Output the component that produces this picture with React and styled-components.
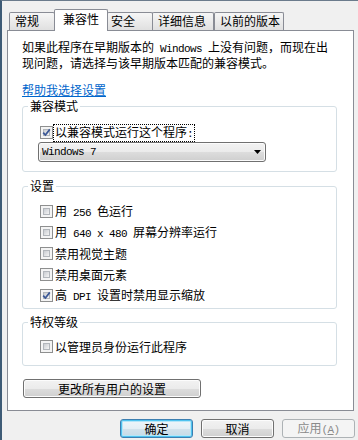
import React from 'react'
import styled, { createGlobalStyle, css } from 'styled-components'

const GlobalStyle = createGlobalStyle`
  html, body {
    margin: 0;
    padding: 0;
    background: #f0f0f0;
  }
  body {
    font-family: "Noto Sans CJK SC", "Noto Sans", sans-serif;
    font-size: 12px;
    color: #000;
  }
`

const Window = styled.div`
  box-sizing: border-box;
  width: 358px;
  height: 440px;
  overflow: hidden;
  background: #f0f0f0;
  border-top: 1px solid #6b7b8c;
  border-left: 2px solid #3e5b76;
  display: flex;
  flex-direction: column;
`

const TabStrip = styled.div`
  display: flex;
  align-items: flex-end;
  height: 21px;
  margin: 8px 0 0 7px;
`

const Tab = styled.div`
  box-sizing: border-box;
  width: ${p => p.$w}px;
  height: ${p => (p.$active ? 22 : 18)}px;
  margin-left: ${p => p.$ml || 0}px;
  margin-bottom: ${p => (p.$active ? -1 : 0)}px;
  padding-left: ${p => p.$pl}px;
  border: 1px solid #898c95;
  border-bottom: none;
  border-radius: 2px 2px 0 0;
  background: ${p => (p.$active ? '#fff' : 'linear-gradient(#f6f6f6, #ebebeb 50%, #e0e0e0)')};
  line-height: ${p => (p.$active ? 18 : 16)}px;
  white-space: nowrap;
  position: relative;
  z-index: ${p => (p.$active ? 2 : 1)};
`

const Panel = styled.div`
  box-sizing: border-box;
  width: 347px;
  height: 381px;
  margin-left: 5px;
  padding: 9px 16px 0 14px;
  background: #fff;
  border: 1px solid #898c95;
  display: flex;
  flex-direction: column;
  align-items: flex-start;
`

const Lat = styled.span`
  font-family: "Liberation Mono", monospace;
  font-size: 11px;
  letter-spacing: -0.6px;
`

const Intro = styled.p`
  margin: 0;
  line-height: 13px;
  white-space: nowrap;
`

const HelpLink = styled.a`
  margin-top: 14px;
  line-height: 13px;
  color: #0066cc;
  text-decoration: underline;
  cursor: pointer;
`

const Group = styled.section`
  box-sizing: border-box;
  width: 315px;
  margin-top: ${p => p.$mt}px;
  padding-bottom: ${p => p.$pb}px;
  border: 1px solid #d5dfe5;
  border-radius: 3px;
  display: flex;
  flex-direction: column;
  align-items: flex-start;
`

const GroupTitle = styled.div`
  margin: -8px 0 0 5px;
  padding: 0 2px;
  line-height: 14px;
  background: #fff;
`

const GroupBody = styled.div`
  display: flex;
  flex-direction: column;
  align-items: flex-start;
  gap: ${p => p.$gap || 0}px;
  padding: ${p => p.$pt}px 0 0 17px;
`

const Option = styled.label`
  display: flex;
  align-items: center;
  gap: 1px;
  height: 15px;
  white-space: nowrap;
`

const OptionText = styled.span`
  padding: 0 1px;
  line-height: 13px;
  outline: ${p => (p.$focus ? '1px dotted #000' : 'none')};
`

const Box = styled.span`
  position: relative;
  flex: none;
  box-sizing: border-box;
  width: 13px;
  height: 13px;
  padding: 2px;
  border: 1px solid #8e8f8f;
  background: #f4f4f4;
`

const BoxFill = styled.span`
  display: block;
  box-sizing: border-box;
  width: 7px;
  height: 7px;
  border: 1px solid #b2b6bb;
  background: linear-gradient(135deg, #c9ccd1, #f4f4f4);
`

const Tick = styled.svg`
  position: absolute;
  left: 0;
  top: 0;
`

const Select = styled.div`
  box-sizing: border-box;
  width: 228px;
  height: 20px;
  margin: 2px 0 0 -2px;
  padding: 0 4px 0 3px;
  display: flex;
  align-items: center;
  justify-content: space-between;
  border: 1px solid #707070;
  border-radius: 3px;
  background: linear-gradient(#f2f2f2, #ebebeb 50%, #dddddd 50%, #cfcfcf);
  box-shadow: inset 0 0 0 1px #fbfbfb;
`

const Button = styled.button`
  box-sizing: border-box;
  width: ${p => p.$w}px;
  height: 19px;
  margin: ${p => p.$m || 0};
  padding: 0;
  font: inherit;
  line-height: 15px;
  color: #000;
  border: 1px solid #707070;
  border-radius: 3px;
  background: linear-gradient(#f2f2f2, #ebebeb 50%, #dddddd 50%, #cfcfcf);
  box-shadow: inset 0 0 0 1px #fcfcfc;
  white-space: nowrap;

  ${p => p.$primary && css`
    border-color: #3c7fb1;
    background: linear-gradient(#eef6fa, #e4eff5 50%, #d3e3ec 50%, #c6dae6);
    box-shadow: inset 0 0 0 1px #4fc3ef, inset 0 0 0 2px #b5e6f8;
  `}

  ${p => p.disabled && css`
    color: #8a8a8a;
    border-color: #adb2b5;
    background: #f4f4f4;
    box-shadow: none;
  `}
`

const Footer = styled.div`
  display: flex;
  justify-content: flex-end;
  gap: 8px;
  margin: 8px 3px 0 0;
`

const tabs = [
  { label: '常规', w: 46, pl: 5 },
  { label: '兼容性', w: 54, pl: 8, ml: -1, active: true },
  { label: '安全', w: 46, pl: 3, ml: -1 },
  { label: '详细信息', w: 62, pl: 5, ml: -1 },
  { label: '以前的版本', w: 70, pl: 5 },
]

function Checkbox({ checked }) {
  return (
    <Box>
      <BoxFill />
      {checked && (
        <Tick width="11" height="11" viewBox="0 0 11 11">
          <path d="M2.2 5.6 L4.4 8 L8.8 2.4" fill="none" stroke="#3a5796" strokeWidth="1.7" />
        </Tick>
      )}
    </Box>
  )
}

function CheckOption({ checked, focus, children }) {
  return (
    <Option>
      <Checkbox checked={checked} />
      <OptionText $focus={focus}>{children}</OptionText>
    </Option>
  )
}

export default function App() {
  return (
    <Window>
      <GlobalStyle />
      <TabStrip>
        {tabs.map(t => (
          <Tab key={t.label} $w={t.w} $pl={t.pl} $ml={t.ml} $active={t.active}>
            {t.label}
          </Tab>
        ))}
      </TabStrip>

      <Panel>
        <Intro>
          如果此程序在早期版本的<Lat> Windows </Lat>上没有问题，而现在出
          <br />
          现问题，请选择与该早期版本匹配的兼容模式。
        </Intro>
        <HelpLink>帮助我选择设置</HelpLink>

        <Group $mt={10} $pb={9}>
          <GroupTitle>兼容模式</GroupTitle>
          <GroupBody $pt={12}>
            <CheckOption checked focus>
              以兼容模式运行这个程序<Lat>:</Lat>
            </CheckOption>
            <Select>
              <Lat>Windows 7</Lat>
              <svg width="7" height="4" viewBox="0 0 7 4">
                <polygon points="0,0 7,0 3.5,4" fill="#000" />
              </svg>
            </Select>
          </GroupBody>
        </Group>

        <Group $mt={14} $pb={5}>
          <GroupTitle>设置</GroupTitle>
          <GroupBody $pt={11} $gap={6}>
            <CheckOption>用<Lat> 256 </Lat>色运行</CheckOption>
            <CheckOption>用<Lat> 640 x 480 </Lat>屏幕分辨率运行</CheckOption>
            <CheckOption>禁用视觉主题</CheckOption>
            <CheckOption>禁用桌面元素</CheckOption>
            <CheckOption checked>高<Lat> DPI </Lat>设置时禁用显示缩放</CheckOption>
          </GroupBody>
        </Group>

        <Group $mt={13} $pb={11}>
          <GroupTitle>特权等级</GroupTitle>
          <GroupBody $pt={10}>
            <CheckOption>以管理员身份运行此程序</CheckOption>
          </GroupBody>
        </Group>

        <Button $w={178} $m="13px 0 0 1px">更改所有用户的设置</Button>
      </Panel>

      <Footer>
        <Button $w={73} $primary>确定</Button>
        <Button $w={73}>取消</Button>
        <Button $w={73} disabled>
          应用<Lat>(<u>A</u>)</Lat>
        </Button>
      </Footer>
    </Window>
  )
}
